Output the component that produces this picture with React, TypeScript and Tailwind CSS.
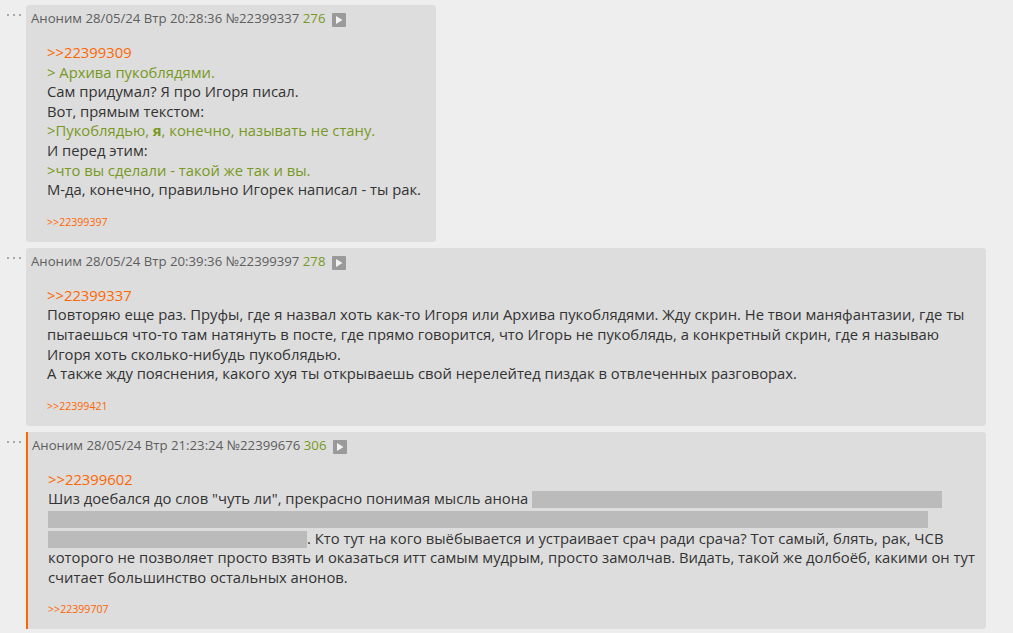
import type { ReactNode } from "react";

interface PostProps {
  name?: string;
  date: string;
  num: string;
  idx: string;
  replyTo: string;
  replies: string;
  width?: string;
  highlighted?: boolean;
  className?: string;
  children: ReactNode;
}

function Dots() {
  return (
    <div className="flex w-[26px] shrink-0 gap-[4px] pl-[7px] pt-[9px]">
      <span className="h-[2px] w-[2px] bg-[#a8a8a8]" />
      <span className="h-[2px] w-[2px] bg-[#a8a8a8]" />
      <span className="h-[2px] w-[2px] bg-[#a8a8a8]" />
    </div>
  );
}

function PlayIcon() {
  return (
    <span className="ml-[7px] inline-flex h-[14px] w-[14px] items-center justify-center rounded-[1px] bg-[#9a9a9a] align-[-2px]">
      <svg width="8" height="10" viewBox="0 0 8 10">
        <path d="M1 1 L7.5 5 L1 9 Z" fill="#f2f2f2" />
      </svg>
    </span>
  );
}

function Post({ name = "Аноним", date, num, idx, replyTo, replies, width, highlighted, className = "", children }: PostProps) {
  return (
    <div className={`flex ${className}`}>
      <Dots />
      <div
        className={`${width ?? "w-[960px]"} rounded-[3px] bg-[#dddddd] pb-[13px] pt-[3px] ${
          highlighted ? "rounded-l-none border-l-[2px] border-[#ff6600] pl-[4px]" : "pl-[5px]"
        }`}
      >
        <div className="h-[20px] whitespace-nowrap text-[13.2px] leading-[20px] text-[#5e5e5e]">
          {name} {date} №{num} <span className="text-[#789922]">{idx}</span>
          <PlayIcon />
        </div>
        <div className="ml-[16px] mr-[9px] mt-[15px] text-[14.8px] leading-[19.6px] text-[#333333]">
          <div className="text-[#ff6600]">&gt;&gt;{replyTo}</div>
          {children}
        </div>
        <div className="ml-[16px] mt-[15px] text-[10.6px] leading-[14px] text-[#ff6600]">&gt;&gt;{replies}</div>
      </div>
    </div>
  );
}

function Quote({ children }: { children: ReactNode }) {
  return <div className="text-[#789922]">{children}</div>;
}

function Spoiler({ w }: { w: string }) {
  return <span className={`inline-block h-[17px] ${w} bg-[#bbbbbb] align-[-4px]`} />;
}

export default function App() {
  return (
    <div className="min-h-[633px] bg-[#eeeeee] pt-[5px]" style={{ fontFamily: "'Open Sans', 'Noto Sans', sans-serif" }}>
      <Post date="28/05/24 Втр 20:28:36" num="22399337" idx="276" replyTo="22399309" replies="22399397" width="w-[410px]">
        <Quote>&gt; Архива пукоблядями.</Quote>
        <div>Сам придумал? Я про Игоря писал.</div>
        <div>Вот, прямым текстом:</div>
        <Quote>
          &gt;Пукоблядью, <b className="font-bold">я</b>, конечно, называть не стану.
        </Quote>
        <div>И перед этим:</div>
        <Quote>&gt;что вы сделали - такой же так и вы.</Quote>
        <div>М-да, конечно, правильно Игорек написал - ты рак.</div>
      </Post>

      <Post className="mt-[6px]" date="28/05/24 Втр 20:39:36" num="22399397" idx="278" replyTo="22399337" replies="22399421">
        <div>
          Повторяю еще раз. Пруфы, где я назвал хоть как-то Игоря или Архива пукоблядями. Жду скрин. Не твои маняфантазии, где ты
          пытаешься что-то там натянуть в посте, где прямо говорится, что Игорь не пукоблядь, а конкретный скрин, где я называю
          Игоря хоть сколько-нибудь пукоблядью.
        </div>
        <div>А также жду пояснения, какого хуя ты открываешь свой нерелейтед пиздак в отвлеченных разговорах.</div>
      </Post>

      <Post className="mt-[6px]" highlighted date="28/05/24 Втр 21:23:24" num="22399676" idx="306" replyTo="22399602" replies="22399707">
        <div>
          Шиз доебался до слов "чуть ли", прекрасно понимая мысль анона <Spoiler w="w-[410px]" /> <Spoiler w="w-[880px]" />{" "}
          <Spoiler w="w-[259px]" />. Кто тут на кого выёбывается и устраивает срач ради срача? Тот самый, блять, рак, ЧСВ
          которого не позволяет просто взять и оказаться итт самым мудрым, просто замолчав. Видать, такой же долбоёб, какими он тут
          считает большинство остальных анонов.
        </div>
      </Post>
    </div>
  );
}
